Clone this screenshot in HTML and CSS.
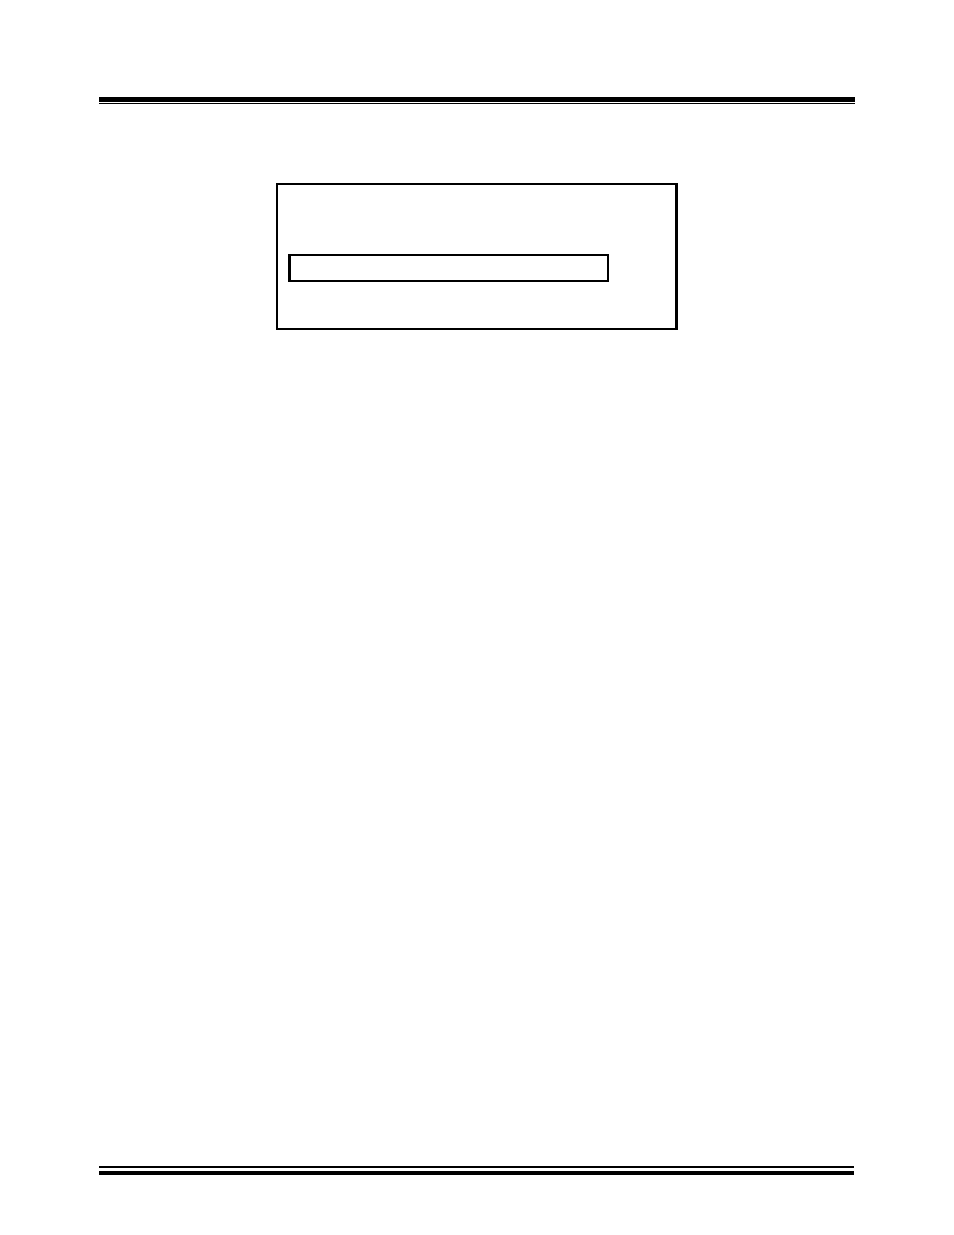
FILE: index.html
```html
<!DOCTYPE html>
<html lang="en">

<head>
    <meta charset="UTF-8">
    <meta name="viewport" content="width=device-width, initial-scale=1.0">
    <title>Page</title>
    <link rel="stylesheet" href="styles.css">
</head>

<body>
    <header class="rule rule-top"></header>
    <main>
        <div class="panel">
            <div class="field"></div>
        </div>
    </main>
    <footer class="rule rule-bottom"></footer>
</body>

</html>
```

FILE: styles.css
```css
* {
    box-sizing: border-box;
    margin: 0;
    padding: 0;
}

body {
    display: flex;
    flex-direction: column;
    min-height: 100vh;
    padding: 97px 99px 60px;
    background: #fff;
}

main {
    flex: 1;
    padding-top: 79px;
}

/* thick and thin double rules */
.rule {
    border: 0 solid #000;
}

.rule-top {
    height: 7px;
    border-top-width: 5px;
    border-bottom-width: 1px;
}

.rule-bottom {
    height: 9px;
    margin-right: 1px;
    border-top-width: 2px;
    border-bottom-width: 4px;
}

.panel {
    max-width: 402px;
    margin: 0 auto;
    padding: 69px 66px 46px 10px;
    border: 2px solid #000;
    border-right-width: 3px;
}

.field {
    height: 28px;
    border: 2px solid #000;
    border-left-width: 3px;
}

@media (max-width: 576px) {
    body {
        padding: 32px 16px;
    }

    .panel {
        padding-right: 10px;
    }
}
```
